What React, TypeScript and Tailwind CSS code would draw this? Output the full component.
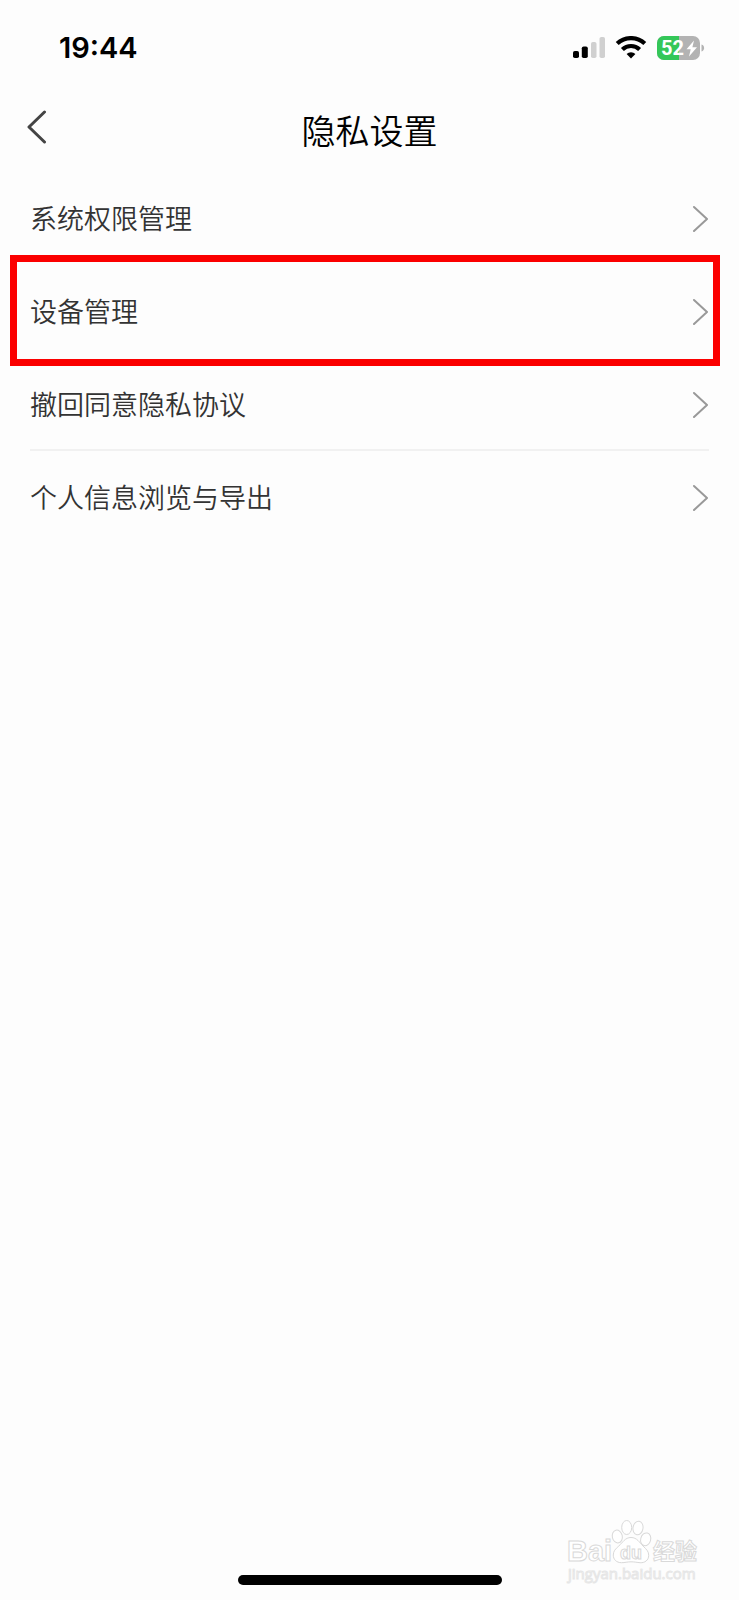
const items = [
  { label: '系统权限管理', href: '#permissions' },
  { label: '设备管理', href: '#devices', highlighted: true },
  { label: '撤回同意隐私协议', href: '#revoke', divider: true },
  { label: '个人信息浏览与导出', href: '#export' },
]

function StatusBar() {
  return (
    <div className="flex h-[95px] items-center justify-between pl-[59px] pr-[34px]">
      <span className="font-['Inter',sans-serif] text-[29px] font-semibold leading-8 text-black">19:44</span>
      <div className="flex items-center gap-[9px]">
        {/* Signal */}
        <svg width="34" height="24" viewBox="0 0 34 24" aria-hidden="true">
          <rect x="1" y="15" width="6" height="7" rx="1.800" fill="#000" />
          <rect x="9.800" y="10.500" width="6" height="11.500" rx="1.800" fill="#000" />
          <rect x="19" y="6" width="5.500" height="16" rx="1.800" fill="#d0d0d0" />
          <rect x="27.500" y="1" width="5.500" height="21" rx="1.800" fill="#d0d0d0" />
        </svg>
        {/* Wi-Fi */}
        <svg width="32" height="24" viewBox="0 0 32 24" fill="none" stroke="#000" strokeWidth="4.200" aria-hidden="true">
          <path d="M2.200 7.600a20 20 0 0 1 27.600 0" />
          <path d="M7.400 13.500a12.300 12.300 0 0 1 17.200 0" />
          <path d="M11.600 18a6.200 6.200 0 0 1 8.800 0L16 22.400Z" fill="#000" stroke="none" />
        </svg>
        {/* Battery */}
        <svg width="49" height="24" viewBox="0 0 49 24" aria-label="52%">
          <rect x="1" y="0" width="43" height="24" rx="7" fill="#b3b3b3" />
          <path d="M8 0h15v24H8a7 7 0 0 1-7-7V7a7 7 0 0 1 7-7Z" fill="#34c759" />
          <path d="M45.500 8.500c1.800.6 2.600 1.900 2.600 3.500s-.8 2.900-2.600 3.500Z" fill="#b3b3b3" />
          <text x="5" y="19" fontFamily="Roboto, sans-serif" fontSize="20" fontWeight="700" fill="#fff">52</text>
          <path d="M38 4.500 30.500 13.200h4.200L33 20.500l8-9.200h-4.600Z" fill="#fff" />
        </svg>
      </div>
    </div>
  )
}

function Watermark() {
  return (
    <svg width="140" height="66" viewBox="0 0 140 66" fill="#fff" stroke="#d9d9d9" strokeWidth="1" aria-hidden="true">
      <g fontFamily="'Liberation Sans', sans-serif" fontWeight="700">
        <text x="3" y="41" fontSize="29">Bai</text>
        <ellipse cx="53.300" cy="16.500" rx="5" ry="6.500" transform="rotate(-12 53.300 16.500)" />
        <ellipse cx="62.700" cy="7.500" rx="5" ry="7" />
        <ellipse cx="74" cy="8" rx="5" ry="6.800" transform="rotate(10 74 8)" />
        <ellipse cx="81.700" cy="19.300" rx="5" ry="6.500" transform="rotate(15 81.700 19.300)" />
        <path d="M67 17.500c6 0 8.500 5 12 8.500 3.700 3.500 5.700 5.500 5.700 9.300 0 5-4 7.700-8.500 7.400-3.200-.2-5.500-.9-9.200-.9s-6 .9-9.500.9c-5 0-8.200-3.200-8.200-7.600 0-4 2-6 5.500-9.100 4-3.500 6.200-8.500 12.200-8.500Z" />
        <text x="56" y="39" fontSize="18">du</text>
      </g>
      <text x="89" y="39" fontSize="22" fontWeight="700" fontFamily="'Noto Sans CJK SC', sans-serif">经验</text>
      <text x="4" y="59" fontSize="15" fontFamily="'Open Sans', sans-serif" stroke="#e6e6e6">jingyan.baidu.com</text>
    </svg>
  )
}

export default function App() {
  return (
    <div className="relative flex min-h-screen flex-col bg-[#fdfdfd] font-['Noto_Sans_CJK_SC',sans-serif]">
      <StatusBar />

      <header className="grid h-[77px] grid-cols-[1fr_auto_1fr] items-start px-6 pt-[15px]">
        <button type="button" aria-label="返回" className="w-8">
          <svg width="26" height="36" viewBox="0 0 26 36" fill="none" stroke="#444" strokeWidth="3" strokeLinecap="round" strokeLinejoin="round" aria-hidden="true">
            <path d="M20.500 2 5 17l15.500 15" />
          </svg>
        </button>
        <h1 className="text-[34px] font-[350] leading-10 text-black">隐私设置</h1>
      </header>

      <nav>
        <ul>
          {items.map(item => (
            <li key={item.label} className="relative px-[30px]">
              <a
                href={item.href}
                className={`flex h-[93px] items-center justify-between border-b-2 ${item.divider ? 'border-[#f1f1f1]' : 'border-transparent'}`}
              >
                <span className="text-[27px] font-[350] leading-9 text-[#333]">{item.label}</span>
                <svg width="18" height="28" viewBox="0 0 18 28" fill="none" stroke="#999" strokeWidth="2" strokeLinecap="round" strokeLinejoin="round" aria-hidden="true">
                  <path d="M3 3 16 15 3 27" />
                </svg>
              </a>
              {item.highlighted && (
                <div className="pointer-events-none absolute -bottom-2 -top-[10px] left-[10px] right-[19px] border-[7px] border-[#fb0000]" />
              )}
            </li>
          ))}
        </ul>
      </nav>

      <footer className="mt-auto flex justify-center pb-[15px]">
        <div className="h-[10px] w-[264px] rounded-full bg-black" />
      </footer>

      <div className="pointer-events-none absolute bottom-[14px] right-[35px]">
        <Watermark />
      </div>
    </div>
  )
}
